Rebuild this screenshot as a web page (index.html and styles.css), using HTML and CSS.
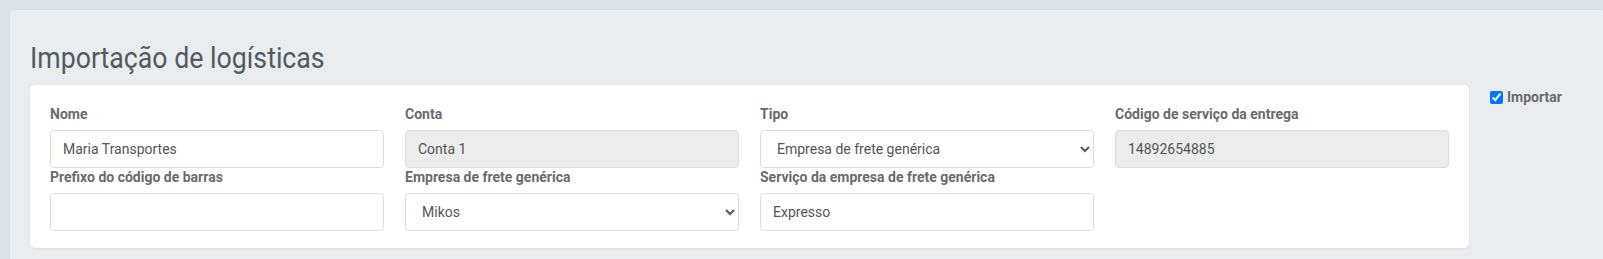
FILE: index.html
```html
<!DOCTYPE html>
<html lang="pt-BR">
<head>
    <meta charset="UTF-8">
    <meta name="viewport" content="width=device-width, initial-scale=1.0">
    <title>Importação de logísticas</title>
    <link rel="stylesheet" href="styles.css">
</head>
<body>
    <div class="panel">
        <h2 class="panel-title">Importação de logísticas</h2>
        <div class="row">
            <div class="card">
                <div class="fields">
                    <div class="field">
                        <label for="nome">Nome</label>
                        <input type="text" id="nome" value="Maria Transportes">
                    </div>
                    <div class="field">
                        <label for="conta">Conta</label>
                        <input type="text" id="conta" value="Conta 1" disabled>
                    </div>
                    <div class="field">
                        <label for="tipo">Tipo</label>
                        <select id="tipo">
                            <option>Empresa de frete genérica</option>
                        </select>
                    </div>
                    <div class="field">
                        <label for="codigo">Código de serviço da entrega</label>
                        <input type="text" id="codigo" value="14892654885" disabled>
                    </div>
                    <div class="field">
                        <label for="prefixo">Prefixo do código de barras</label>
                        <input type="text" id="prefixo">
                    </div>
                    <div class="field">
                        <label for="empresa">Empresa de frete genérica</label>
                        <select id="empresa">
                            <option>Mikos</option>
                        </select>
                    </div>
                    <div class="field">
                        <label for="servico">Serviço da empresa de frete genérica</label>
                        <input type="text" id="servico" value="Expresso">
                    </div>
                </div>
            </div>
            <div class="side">
                <label class="check"><input type="checkbox" checked> Importar</label>
            </div>
        </div>
    </div>
</body>
</html>
```

FILE: styles.css
```css
body {
    font-family: Roboto, "Noto Sans", Arial, sans-serif;
    margin: 0;
    padding: 10px 0 0 10px;
    background-color: #dde3e6;
    color: #555;
}
.panel {
    background: #e9edf0;
    border-radius: 4px 0 0 0;
    padding: 30px 0 20px 20px;
    box-shadow: 0 0 4px rgba(0, 0, 0, 0.05);
}
/* condensed look of the heading font */
.panel-title {
    font-size: 30px;
    font-weight: 400;
    line-height: 36px;
    margin: 0 0 9px 0;
    color: #535a60;
    transform: scaleX(0.89);
    transform-origin: left center;
}
.row {
    display: flex;
    align-items: flex-start;
}
.card {
    background: white;
    width: 1399px;
    padding: 20px 20px 17px 20px;
    border-radius: 5px;
    box-shadow: 0 1px 3px rgba(0, 0, 0, 0.08);
}
.fields {
    display: grid;
    grid-template-columns: repeat(4, 1fr);
    column-gap: 21px;
}
.field label {
    display: block;
    font-size: 14px;
    font-weight: 700;
    line-height: 18px;
    margin-bottom: 7px;
    color: #6b6b6b;
}
input[type=text], select {
    display: block;
    box-sizing: border-box;
    width: 100%;
    height: 38px;
    padding: 0 12px;
    font-family: inherit;
    font-size: 14px;
    color: #555;
    background: white;
    border: 1px solid #dedede;
    border-radius: 4px;
    outline: none;
}
input[disabled] {
    background: #ececec;
    color: #555;
}
.side {
    padding: 4px 0 0 21px;
}
.check {
    display: flex;
    align-items: center;
    gap: 4px;
    font-size: 14px;
    font-weight: 700;
    color: #6b6b6b;
}
.check input {
    margin: 0;
    width: 13px;
    height: 13px;
}
```
